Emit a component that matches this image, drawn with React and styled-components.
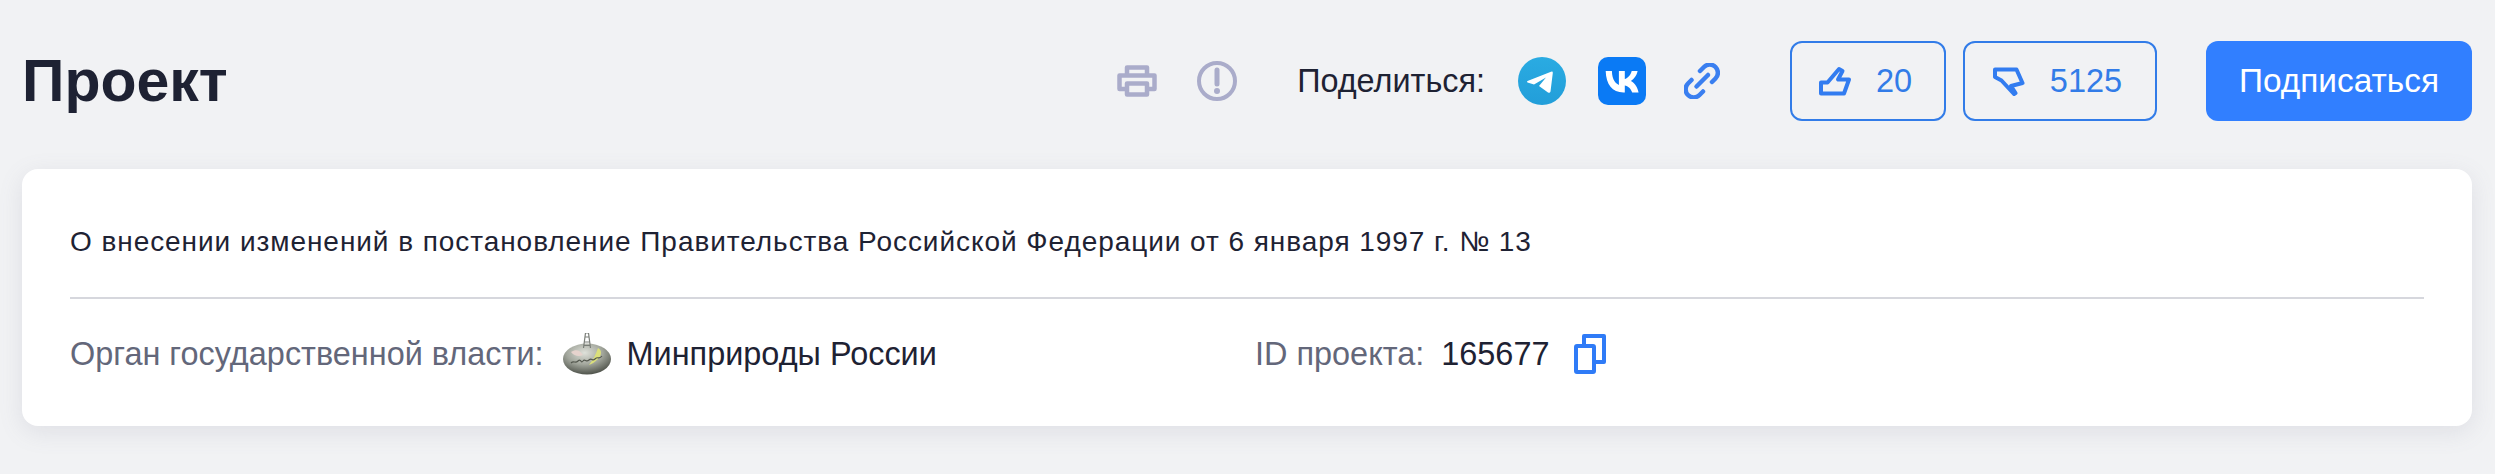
import React from "react";
import styled, { createGlobalStyle } from "styled-components";

const Global = createGlobalStyle`
  html, body { margin: 0; padding: 0; background: #f1f2f4; }
  body { font-family: "Liberation Sans", Arial, sans-serif; color: #1e2233; }
`;

const Page = styled.div`
  width: 2495px;
  height: 474px;
  box-sizing: border-box;
  padding: 41px 23px 0 22px;
  overflow: hidden;
`;

const Header = styled.header`
  display: flex;
  align-items: center;
  height: 80px;
  margin-bottom: 48px;
`;

const Title = styled.h1`
  margin: 0;
  font-size: 59px;
  line-height: 80px;
  font-weight: 700;
  color: #1e2233;
  flex: 1;
`;

const PlainIcon = styled.span`
  display: inline-flex;
  margin-left: ${(p) => p.$ml}px;
`;

const ShareLabel = styled.span`
  margin-left: 60px;
  font-size: 32.4px;
  color: #1e2233;
`;

const Vote = styled.button`
  box-sizing: border-box;
  display: flex;
  align-items: center;
  justify-content: center;
  gap: 25px;
  width: ${(p) => p.$w}px;
  height: 80px;
  margin-left: ${(p) => p.$ml}px;
  padding: 0 5px 0 0;
  background: transparent;
  border: 2px solid #327ce8;
  border-radius: 12px;
  color: #327ce8;
  font: 400 32.5px "Liberation Sans", Arial, sans-serif;
`;

const Subscribe = styled.button`
  width: 266px;
  height: 80px;
  margin-left: 49px;
  padding: 0;
  border: 0;
  border-radius: 12px;
  background: #317fff;
  color: #fff;
  font: 400 33.4px "Liberation Sans", Arial, sans-serif;
`;

const Card = styled.section`
  box-sizing: border-box;
  height: 257px;
  padding: 0 48px;
  background: #fff;
  border-radius: 16px;
  box-shadow: 0 6px 24px rgba(110, 115, 140, 0.14);
`;

const Summary = styled.p`
  box-sizing: border-box;
  margin: 0;
  height: 130px;
  padding-top: 18px;
  display: flex;
  align-items: center;
  border-bottom: 2px solid #d6d7dd;
  font-size: 28px;
  letter-spacing: 0.94px;
  color: #1e2233;
`;

const MetaRow = styled.div`
  display: flex;
  align-items: center;
  height: 110px;
`;

const MetaLabel = styled.span`
  font-size: 32.45px;
  color: #63677a;
`;

const MetaValue = styled.span`
  font-size: 32.45px;
  color: #1e2233;
  margin-left: ${(p) => p.$ml}px;
`;

const LogoWrap = styled.span`
  display: inline-flex;
  margin-left: 19px;
`;

const AgencyBlock = styled.div`
  display: flex;
  align-items: center;
  width: 1185px;
`;

const IconButton = styled.span`
  display: inline-flex;
  margin-left: 24px;
`;

const Printer = () => (
  <svg width="40" height="32" viewBox="0 0 40 32" fill="none" stroke="#aaacca" strokeWidth="4.5" strokeLinejoin="round">
    <path d="M10 10V2.500h20V10" />
    <path d="M9 24H2.500V10.500h35V24H31" />
    <rect x="10" y="18.500" width="20" height="11" />
  </svg>
);

const Alert = () => (
  <svg width="40" height="40" viewBox="0 0 40 40" fill="none">
    <circle cx="20" cy="20" r="18" stroke="#aaacca" strokeWidth="4" />
    <path d="M20 9v14" stroke="#aaacca" strokeWidth="5" strokeLinecap="round" />
    <circle cx="20" cy="30" r="3" fill="#aaacca" />
  </svg>
);

const Telegram = () => (
  <svg width="48" height="48" viewBox="0 0 48 48">
    <defs>
      <linearGradient id="tg" x1="0.5" y1="0" x2="0.5" y2="1">
        <stop offset="0" stopColor="#2aabe2" />
        <stop offset="1" stopColor="#229ed9" />
      </linearGradient>
    </defs>
    <circle cx="24" cy="24" r="24" fill="url(#tg)" />
    <path d="M9.500 24 33 14.800Q35 14 34.800 16L32.500 34.500Q32 36.500 30 35.500L21 29 28 20.500 16 27.500 9.500 25.500Q8.500 24.800 9.500 24z" fill="#fff" />
  </svg>
);

const VK = () => (
  <svg width="48" height="48" viewBox="0 0 48 48">
    <rect width="48" height="48" rx="10" fill="#0a7af5" />
    <path d="M25.500 35.500C14.300 35.500 8 27.700 7.700 14.100h6.200c.2 9.200 4.200 13 7 13.800V14.100h5.900v7.900c2.800-.3 5.800-3.900 6.900-7.900h5.900c-.9 4.900-4.400 8.500-6.700 10 2.300 1.200 6.200 4.300 7.700 11.400h-6.400c-1.200-3.800-4.200-6.700-7.400-7.100v7.100h-1.800z" fill="#fff" />
  </svg>
);

const LinkIcon = () => (
  <svg width="36" height="36" viewBox="0 0 36 36" fill="none" stroke="#3a7ff0" strokeWidth="4.500" strokeLinecap="round">
    <path d="M12.500 23.500 24 12" />
    <path d="M16 8 20 4a8 8 0 0 1 11.500 11.500L28 19" />
    <path d="M7.500 17 4 20.500A8 8 0 0 0 15.500 32L19 28.500" />
  </svg>
);

const ThumbUp = () => (
  <svg width="32" height="30" viewBox="0 0 32 30" fill="none" stroke="#327cf0" strokeWidth="4" strokeLinejoin="round" strokeLinecap="round">
    <path d="M2 27.500V16.500h6.500L20 3l3.500 2-4.500 8.500H30L25 27.500z" />
  </svg>
);

const ThumbDown = () => (
  <svg width="32" height="30" viewBox="0 0 32 30" fill="none" stroke="#327cf0" strokeWidth="4" strokeLinejoin="round" strokeLinecap="round">
    <path d="M2 3.500H23.500L29.500 17 18 20l4.500 7-1.500 1L8.500 14.500 2 11z" />
  </svg>
);

const Copy = () => (
  <svg width="32" height="40" viewBox="0 0 32 40" fill="none" stroke="#2f7bf7" strokeWidth="4" strokeLinejoin="round">
    <rect x="2" y="12" width="18" height="26" rx="1" />
    <path d="M10 12V2h20v26h-10" />
  </svg>
);

const AgencyLogo = () => (
  <svg width="48" height="42" viewBox="0 0 48 42">
    <defs>
      <radialGradient id="globe" cx="0.45" cy="0.3" r="0.75">
        <stop offset="0" stopColor="#dfe1da" />
        <stop offset="0.5" stopColor="#a2a69c" />
        <stop offset="1" stopColor="#43473f" />
      </radialGradient>
    </defs>
    <ellipse cx="24" cy="26" rx="24" ry="15.500" fill="url(#globe)" />
    <path d="M35 15c4 2 4 7 0 11-3 3-6 5-9 6 4-5 7-11 9-17z" fill="#dbe07a" />
    <path d="M8 19c5-3 9-2 12 3-4 2-9 1-12-3z" fill="#e6d3cd" />
    <path d="M20.500 15 22.500 0h3l2 15M21 9h6M20.500 12.500h7M22 4h4" fill="none" stroke="#7a7e78" strokeWidth="1.200" />
    <path d="M8 30c3-3 4 1 7-2s3 3 5 0 3 2 6-1 3 2 6-1 4 1 7-3" fill="none" stroke="#54584f" strokeWidth="1.100" />
  </svg>
);

export default function App() {
  return (
    <Page>
      <Global />
      <Header>
        <Title>Проект</Title>
        <PlainIcon><Printer /></PlainIcon>
        <PlainIcon $ml={40}><Alert /></PlainIcon>
        <ShareLabel>Поделиться:</ShareLabel>
        <PlainIcon $ml={33}><Telegram /></PlainIcon>
        <PlainIcon $ml={32}><VK /></PlainIcon>
        <PlainIcon $ml={38}><LinkIcon /></PlainIcon>
        <Vote $w={156} $ml={70}><ThumbUp />20</Vote>
        <Vote $w={194} $ml={17}><ThumbDown />5125</Vote>
        <Subscribe>Подписаться</Subscribe>
      </Header>
      <Card>
        <Summary>О внесении изменений в постановление Правительства Российской Федерации от 6 января 1997 г. № 13</Summary>
        <MetaRow>
          <AgencyBlock>
            <MetaLabel>Орган государственной власти:</MetaLabel>
            <LogoWrap><AgencyLogo /></LogoWrap>
            <MetaValue $ml={16}>Минприроды России</MetaValue>
          </AgencyBlock>
          <MetaLabel>ID проекта:</MetaLabel>
          <MetaValue $ml={17}>165677</MetaValue>
          <IconButton><Copy /></IconButton>
        </MetaRow>
      </Card>
    </Page>
  );
}
